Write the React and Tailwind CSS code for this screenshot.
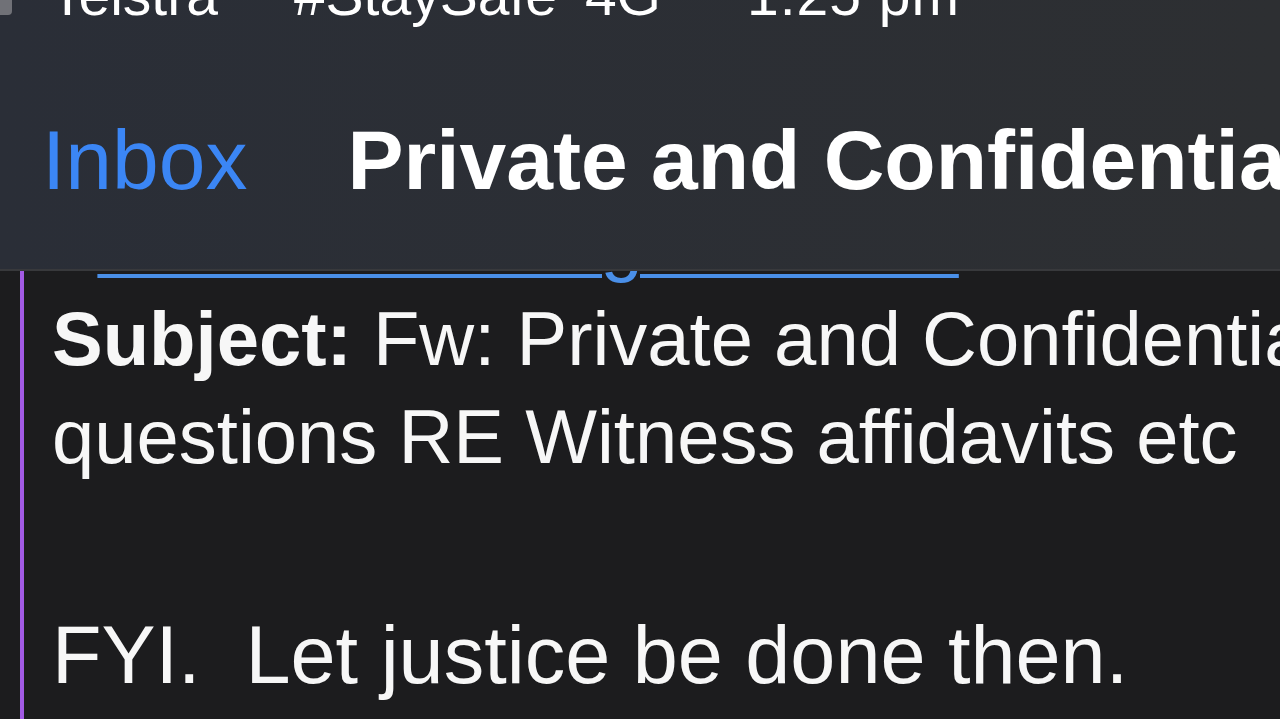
import React from 'react';

export default function App() {
  return (
    <div
      className="w-[1280px] h-[719px] overflow-hidden flex flex-col bg-[#1c1c1e]"
      style={{ fontFamily: '"Liberation Sans", Arial, Helvetica, sans-serif' }}
    >
      {/* Status bar + navigation header (sits over the scrolled message) */}
      <div className="relative z-10 h-[271px] shrink-0 overflow-hidden bg-linear-to-r from-[#2a2e37] to-[#2d2f32] border-b-2 border-[#38393c]">
        <div className="flex items-baseline mt-[-33px] text-[57px] leading-none text-white whitespace-nowrap">
          <span className="inline-block w-[16px] h-[44px] ml-[-4px] mr-[38px] rounded-[4px] bg-[#8e8e93]/70" />
          <span>Telstra</span>
          <span className="ml-[76px]">#StaySafe</span>
          <span className="ml-[28px]">4G</span>
          <span className="ml-[86px] tracking-[1px]">1:25 pm</span>
        </div>

        <div className="flex items-baseline mt-[94px] pl-[42px] text-[84px] leading-none whitespace-nowrap">
          <span className="text-[#3b86f5]">Inbox</span>
          <span className="ml-[100px] font-bold text-white">Private and Confidential questions RE Witness affidavits etc</span>
        </div>
      </div>

      {/* Message body, scrolled so the previous line sits under the header */}
      <div className="flex-1 overflow-hidden">
        <div className="ml-[20px] mt-[-79px] border-l-4 border-[#a25ae4] pl-[28px] pb-[40px] text-[76px] leading-[98px] text-[#f7f7f7] whitespace-nowrap">
          <div>
            &lt;<span className="ml-[1px] tracking-[0.7px] text-[#4a8fe8] underline decoration-[4px] underline-offset-[7px]">Mark Armstrong Barrister</span>&gt;
          </div>
          <div>
            <span className="font-bold">Subject:</span> Fw: Private and Confidential
          </div>
          <div>questions RE Witness affidavits etc</div>
          <div className="mt-[119px] text-[81px] leading-[100px] whitespace-pre">FYI.  Let justice be done then.</div>
        </div>
      </div>
    </div>
  );
}
